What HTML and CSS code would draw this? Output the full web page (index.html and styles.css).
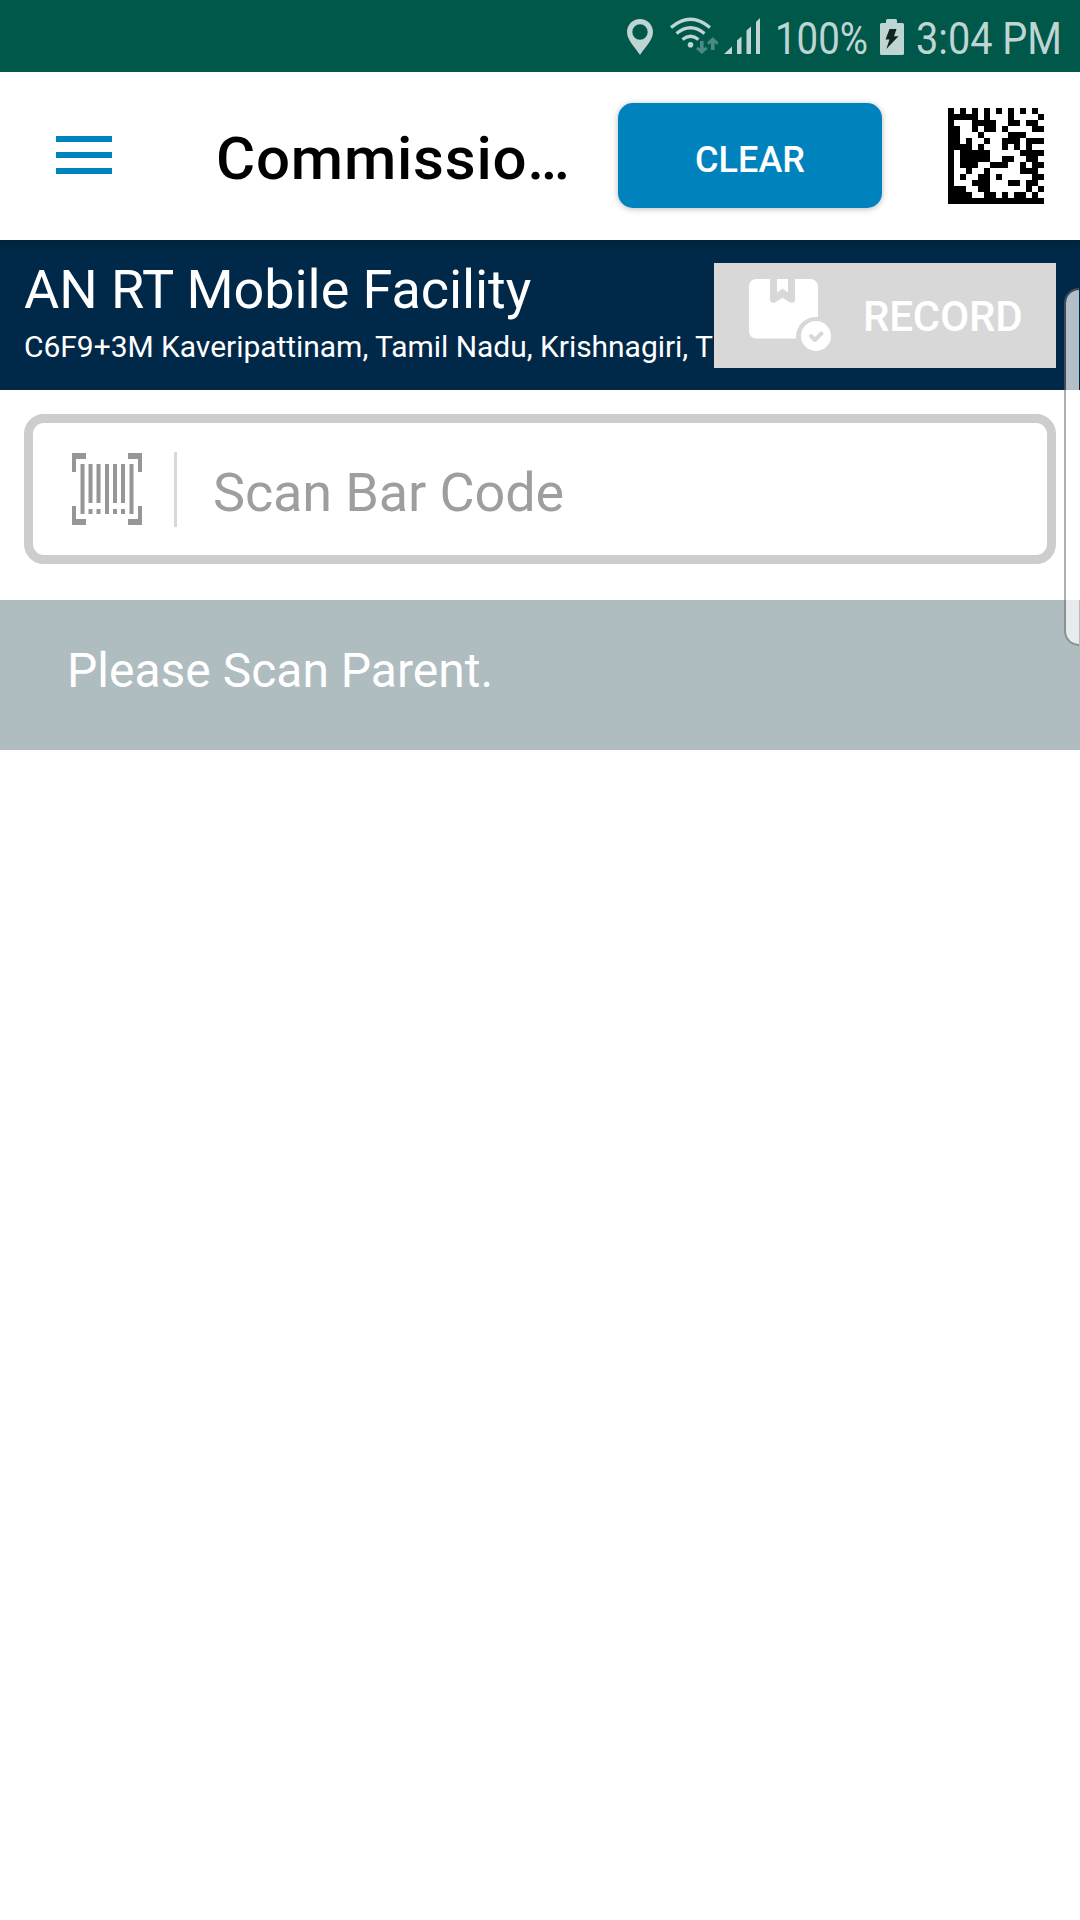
FILE: index.html
```html
<!DOCTYPE html>
<html lang="en">
<head>
<meta charset="utf-8">
<title>Commission</title>
<link rel="stylesheet" href="styles.css">
</head>
<body>
<div class="status-bar">
  <svg class="status-icons" width="470" height="72" viewBox="610 0 470 72">
    <path fill-rule="evenodd" d="M640 19c-7.300 0-13 5.700-13 13 0 8.500 9 16.500 13 23 4-6.500 13-14.500 13-23 0-7.300-5.700-13-13-13zM640 24.300a7.700 7.700 0 1 1 0 15.400 7.700 7.700 0 0 1 0-15.400z"/>
    <g class="wifi-arcs"><path d="M671 27.500q19.500-16.500 39 0M676.500 33.500q14-11.500 28 0M682.500 39.500q8-6.500 16 0"/></g>
    <circle cx="690.500" cy="44.700" r="2.800"/>
    <path class="traffic" d="M700 41h3.600v7.500l2.400-1.700 1.500 2.200-5.700 5-5.700-5 1.500-2.200 2.400 1.700zM711 50v-7l-2.400 1.700-1.500-2.200 5.700-5.200 5.700 5.200-1.500 2.200-2.400-1.700v7z"/>
    <path d="M724 54l8-7.500V54zM737 54V40.500l4.500-4V54zM746.500 54V30.500l4.500-4V54zM756 54V22l4-4V54z"/>
    <text x="775" y="54" textLength="93" lengthAdjust="spacingAndGlyphs">100%</text>
    <path d="M886 23v-2.500a1.500 1.500 0 0 1 1.500-1.500h8a1.500 1.500 0 0 1 1.500 1.500V23h5.500a1.500 1.500 0 0 1 1.500 1.500v29a1.500 1.500 0 0 1-1.500 1.500h-21a1.500 1.500 0 0 1-1.500-1.500v-29a1.500 1.500 0 0 1 1.500-1.500z"/>
    <path class="bolt" d="M889.500 29h7l-2.500 7.300h4.500L886.300 49l3.200-9.500h-4z"/>
    <text x="916" y="54" textLength="146" lengthAdjust="spacingAndGlyphs">3:04 PM</text>
  </svg>
</div>
<header class="app-bar">
  <div class="menu"><span></span><span></span><span></span></div>
  <h1 class="title">Commissio…</h1>
  <button class="clear">CLEAR</button>
  <svg class="matrix" viewBox="0 0 16 16" width="96" height="96">
    <path d="M0 .5h1m1 0h1m1 0h1m1 0h1m1 0h1m1 0h1m1 0h1m1 0h1
      M0 1.500h5m1 0h1m3 0h1m4 0h1
      M0 2.500h1m3 0h4m2 0h2m1 0h2
      M0 3.500h2m2 0h1m1 0h2m1 0h1m4 0h2
      M0 4.500h2m3 0h1m4 0h3
      M0 5.500h2m1 0h1m2 0h1m2 0h3m1 0h3
      M0 6.500h4m1 0h1m3 0h1m1 0h1m1 0h1
      M0 7.500h1m1 0h5m5 0h4
      M0 8.500h1m1 0h5m2 0h2m2 0h2
      M0 9.500h1m1 0h3m2 0h3m2 0h1m1 0h2
      M0 10.500h1m2 0h1m2 0h1m5 0h3
      M0 11.500h1m1 0h1m2 0h2m1 0h1m5 0h2
      M0 12.500h1m3 0h3m3 0h2m1 0h2
      M0 13.500h3m2 0h2m6 0h1m1 0h1
      M0 14.500h4m2 0h2m1 0h1m1 0h2m1 0h1
      M0 15.500h16"/>
  </svg>
</header>
<section class="facility">
  <div class="place">
    <div class="name">AN RT Mobile Facility</div>
    <div class="address">C6F9+3M Kaveripattinam, Tamil Nadu, Krishnagiri, T</div>
  </div>
  <button class="record">
    <svg width="84" height="74" viewBox="748 278 84 74">
      <path fill="#fff" d="M756 279h14v20q0 5 5 3.500l7.500-4.800 7.500 4.800q5 1.500 5-3.500v-20h15.500a7.500 7.500 0 0 1 7.500 7.500V317a20 20 0 0 0-22 21.500h-40a7 7 0 0 1-7-7V286a7 7 0 0 1 7-7z"/>
      <path fill="#fff" d="M777 279h11v13.500l-5.500-4-5.500 4z"/>
      <circle cx="816" cy="336" r="15" fill="#fff"/>
      <path class="check" d="M811 336l4 4 6.500-6.500"/>
    </svg>
    <span>RECORD</span>
  </button>
</section>
<main>
  <div class="scan-field">
    <svg width="70" height="72" viewBox="0 0 70 72">
      <path d="M0 0h14v6H4v13H0zM56 0h14v19h-4V6H56zM0 53h4v13h10v6H0zM66 53h4v19H56v-6h10zM8.500 11h4v50h-4zM16.500 11h4v39h-4zM24.500 11h4v39h-4zM33 11h4v50h-4zM41 11h4v39h-4zM49 11h4v39h-4zM57.500 11h4v50h-4zM16.500 56h4v5h-4zM24.500 56h4v5h-4zM41 56h4v5h-4zM49 56h4v5h-4z"/>
    </svg>
    <span class="divider"></span>
    <span class="placeholder">Scan Bar Code</span>
  </div>
  <div class="notice">Please Scan Parent.</div>
</main>
<div class="edge-handle"></div>
</body>
</html>
```
FILE: styles.css
```css
* { box-sizing: border-box; }
body {
  position: relative;
  margin: 0;
  width: 1080px;
  height: 1920px;
  overflow: hidden;
  background: #fff;
  font-family: Roboto, "Liberation Sans", sans-serif;
}
button { border: 0; margin: 0; font: inherit; color: #fff; }
svg { display: block; flex: none; }

.status-bar { height: 72px; padding-left: 610px; background: #00584b; }
.status-icons { fill: #bfd5d2; font-size: 45px; }
.wifi-arcs { fill: none; stroke: #bfd5d2; stroke-width: 3.2; }
.traffic { fill: #4d8a81; }
.bolt { fill: #122522; }

.app-bar { display: flex; align-items: center; height: 168px; padding-left: 56px; }
.menu { display: flex; flex-direction: column; gap: 10px; width: 56px; margin-bottom: 2px; }
.menu span { height: 6px; background: #0083bd; }
.title {
  width: 402px;
  margin: 0 0 0 104px;
  padding-top: 5px;
  font-size: 60px;
  font-weight: 500;
  letter-spacing: .8px;
  white-space: nowrap;
}
.clear {
  width: 264px;
  height: 105px;
  margin-bottom: 1px;
  padding: 8px 0 0;
  border-radius: 15px;
  background: #0083bd;
  box-shadow: 0 1px 6px rgba(0, 0, 0, .28);
  font-size: 36px;
  font-weight: 500;
}
.matrix { margin-left: 66px; }
.matrix path { stroke: #000; stroke-width: 1; }

.facility {
  display: flex;
  height: 150px;
  padding: 0 24px;
  background: linear-gradient(#00223b, #002848 12px);
  color: #fff;
}
.place { width: 690px; padding-top: 20px; white-space: nowrap; }
.name { font-size: 54px; line-height: 60px; letter-spacing: -.07px; }
.address { margin-top: 7px; font-size: 30px; line-height: 40px; letter-spacing: -.04px; }
.record {
  display: flex;
  width: 342px;
  height: 105px;
  margin-top: 23px;
  padding: 15px 0 0 34px;
  background: #d8d8d8;
  font-size: 42px;
  font-weight: 500;
  letter-spacing: -.15px;
}
.record span { margin-left: 31px; line-height: 77px; }
.check { fill: none; stroke: #d8d8d8; stroke-width: 4; stroke-linecap: round; stroke-linejoin: round; }

.scan-field {
  display: flex;
  align-items: center;
  height: 150px;
  margin: 24px 24px 36px;
  padding-left: 39px;
  border: 9px solid #cdcdcd;
  border-radius: 20px;
}
.scan-field svg { fill: #969696; }
.divider { width: 3px; height: 75px; margin: 0 36px 0 32px; background: #d8d8d8; }
.placeholder { padding-top: 6px; color: #9e9e9e; font-size: 54px; letter-spacing: -.12px; }
.notice {
  height: 150px;
  padding-left: 67px;
  background: #afbcc0;
  color: #fff;
  font-size: 48px;
  line-height: 141px;
}
.edge-handle {
  position: absolute;
  left: 1064px;
  top: 288px;
  width: 15px;
  height: 358px;
  border: 2px solid rgba(110, 110, 110, .55);
  border-right: 0;
  border-radius: 15px 0 0 15px;
  background: rgba(255, 255, 255, .7);
  background-clip: padding-box;
}
```
